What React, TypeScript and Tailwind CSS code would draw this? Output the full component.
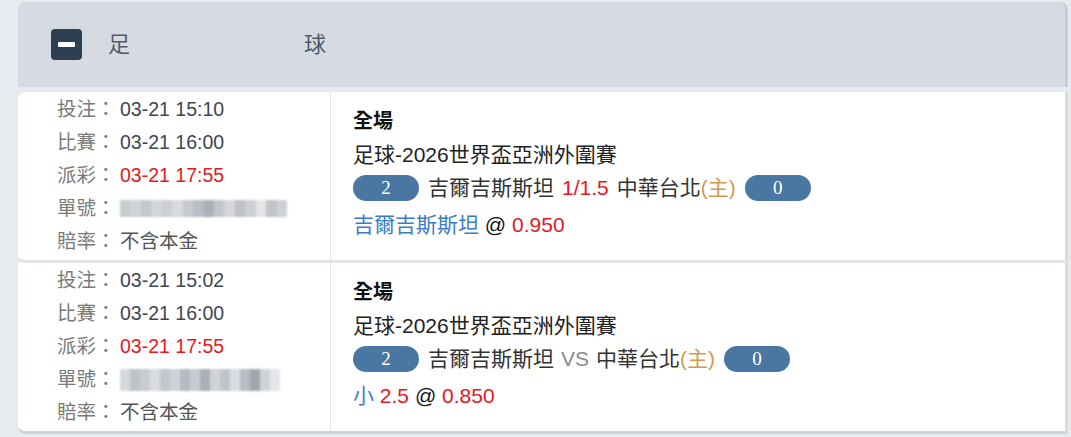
import React from 'react';

type Bet = {
  placed: string;
  match: string;
  payout: string;
  blur: string[];
  blurW: number;
  blurH: number;
  middle: React.ReactNode;
  pick: React.ReactNode;
};

const red = 'text-[#e5171f]';

const bets: Bet[] = [
  {
    placed: '03-21 15:10',
    match: '03-21 16:00',
    payout: '03-21 17:55',
    blur: ['#c9cdd2', '#cfd3d8', '#c4c8cd', '#d2d5d9', '#cbcfd3', '#d8dadd', '#c5c9ce', '#b9bec4', '#aab0b7', '#c3c7cc', '#d5d7da', '#bfc3c8', '#cdd0d4', '#e4e5e7', '#c0c4c9', '#cdd1d5'],
    blurW: 167,
    blurH: 17,
    middle: (
      <>
        <span>吉爾吉斯斯坦</span>
        <span className={`mx-[8px] ${red}`}>1/1.5</span>
        <span>中華台北</span>
        <span className="text-[#d49a4c]">(主)</span>
      </>
    ),
    pick: (
      <>
        <span className="text-[#3b7dc6]">吉爾吉斯斯坦</span> <span className="text-[#111]">@</span>{' '}
        <span className={red}>0.950</span>
      </>
    ),
  },
  {
    placed: '03-21 15:02',
    match: '03-21 16:00',
    payout: '03-21 17:55',
    blur: ['#d4d8dc', '#bcc2c8', '#c9cdd2', '#d9dcdf', '#c2c7cc', '#ced2d6', '#b4bac1', '#c8ccd1', '#a9b0b7', '#d0d3d7', '#bfc4c9', '#dadde0', '#b7bcc2', '#9fa6ae', '#cfd2d6', '#e2e5ea'],
    blurW: 160,
    blurH: 22,
    middle: (
      <>
        <span>吉爾吉斯斯坦</span>
        <span className="mx-[7px] text-[#8a8a8a]">VS</span>
        <span>中華台北</span>
        <span className="text-[#d49a4c]">(主)</span>
      </>
    ),
    pick: (
      <>
        <span className="text-[#3b7dc6]">小</span> <span className={red}>2.5</span>{' '}
        <span className="text-[#111]">@</span> <span className={red}>0.850</span>
      </>
    ),
  },
];

function Pill({ n }: { n: number }) {
  return (
    <span className="flex h-[26px] w-[66px] shrink-0 items-center justify-center rounded-full bg-[#4a77a2] font-['Liberation_Serif',serif] text-[19px] leading-none text-white">
      {n}
    </span>
  );
}

function Blurred({ colors, w, h }: { colors: string[]; w: number; h: number }) {
  return (
    <span className="inline-flex overflow-hidden blur-[1px]" style={{ width: w, height: h }}>
      {colors.map((c, i) => (
        <span key={i} className="h-full flex-1" style={{ backgroundColor: c }} />
      ))}
    </span>
  );
}

function Line({ label, children }: { label: string; children: React.ReactNode }) {
  return (
    <div className="flex items-center">
      <span className="inline-block w-[63px] shrink-0 text-[#7a7a7a]">{label}</span>
      {children}
    </div>
  );
}

function Row({ bet, last }: { bet: Bet; last: boolean }) {
  return (
    <div
      className={`flex h-[171px] bg-white border-r-[3px] border-r-[#d9dbde] ${
        last ? 'rounded-bl-lg border-b-[3px] border-b-[#cfd3d8]' : 'rounded-l-lg border-b-[3px] border-b-[#e2e4e7]'
      }`}
    >
      <div className="w-[313px] shrink-0 border-r border-[#e6e6e6] pl-[39px] pt-[1px] text-[19.5px] leading-[33px]">
        <Line label="投注：">
          <span className="text-[#3d4652]">{bet.placed}</span>
        </Line>
        <Line label="比賽：">
          <span className="text-[#3d4652]">{bet.match}</span>
        </Line>
        <Line label="派彩：">
          <span className={red}>{bet.payout}</span>
        </Line>
        <Line label="單號：">
          <Blurred colors={bet.blur} w={bet.blurW} h={bet.blurH} />
        </Line>
        <Line label="賠率：">
          <span className="text-[#555]">不含本金</span>
        </Line>
      </div>
      <div className="flex-1 pl-[22px] pt-[13px] text-[21px] leading-[33px] text-[#222]">
        <div className="text-[20px] font-bold text-[#111]">全場</div>
        <div>足球-2026世界盃亞洲外圍賽</div>
        <div className="flex items-center gap-[9px]">
          <Pill n={2} />
          <span className="flex whitespace-pre text-[#333]">{bet.middle}</span>
          <Pill n={0} />
        </div>
        <div className="mt-[4px] whitespace-pre">{bet.pick}</div>
      </div>
    </div>
  );
}

export default function App() {
  return (
    <div className="h-[437px] overflow-hidden bg-[#e7eaee] pl-[18px] pr-[3px] pt-[2px] font-['Liberation_Sans','Noto_Sans_CJK_TC',sans-serif]">
      <div className="flex h-[85px] items-center rounded-t-lg border-r-[3px] border-r-[#c9cdd3] bg-[#d6dbe3] pl-[33px]">
        <span className="flex h-[31px] w-[31px] items-center justify-center rounded-[4px] bg-[#2e3f51]">
          <span className="h-[5px] w-[17px] rounded-[1px] bg-white" />
        </span>
        <div className="ml-[26px] flex w-[218px] justify-between text-[22px] text-[#505b69]">
          <span>足</span>
          <span>球</span>
        </div>
      </div>
      <div className="mt-[5px]">
        {bets.map((b, i) => (
          <Row key={i} bet={b} last={i === bets.length - 1} />
        ))}
      </div>
    </div>
  );
}
